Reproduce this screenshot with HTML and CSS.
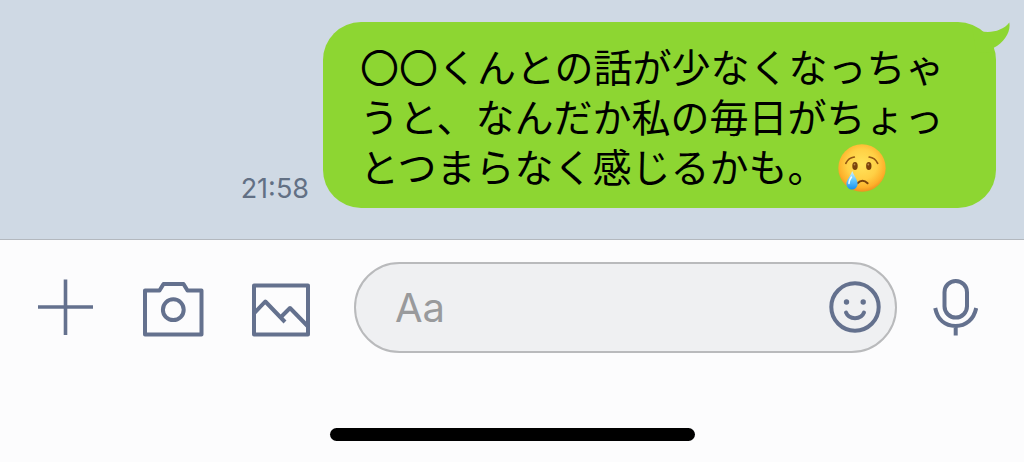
FILE: index.html
```html
<!DOCTYPE html>
<html lang="ja">
<head>
    <meta charset="UTF-8">
    <meta name="viewport" content="width=device-width, initial-scale=1.0">
    <title>トーク</title>
    <link rel="stylesheet" href="styles.css">
</head>
<body>
    <main class="chat">
        <div class="message">
            <time class="time" datetime="21:58">21:58</time>
            <div class="bubble">
                <p class="text">〇〇くんとの話が少なくなっちゃうと、なんだか私の毎日がちょっとつまらなく感じるかも。<svg class="emoji" viewBox="0 0 48 48" role="img" aria-label="泣き顔">
                    <defs>
                        <radialGradient id="face" cx="0.5" cy="0.42" r="0.58">
                            <stop offset="0" stop-color="#ffe45c"/>
                            <stop offset="0.55" stop-color="#ffd045"/>
                            <stop offset="0.85" stop-color="#fdb02a"/>
                            <stop offset="1" stop-color="#ef9020"/>
                        </radialGradient>
                        <linearGradient id="tear" x1="0" y1="0" x2="0" y2="1">
                            <stop offset="0" stop-color="#d4f3ff"/>
                            <stop offset="0.5" stop-color="#62c6fb"/>
                            <stop offset="1" stop-color="#1590ee"/>
                        </linearGradient>
                    </defs>
                    <circle cx="24" cy="24" r="23.7" fill="url(#face)"/>
                    <ellipse cx="17" cy="22" rx="2.7" ry="3.9" fill="#7a430b"/>
                    <ellipse cx="30.8" cy="22" rx="2.7" ry="3.9" fill="#7a430b"/>
                    <circle cx="16.5" cy="20.5" r="0.9" fill="#b98a4a"/>
                    <circle cx="30.3" cy="20.5" r="0.9" fill="#b98a4a"/>
                    <path d="M7.8 19.3Q10.5 13.8 16.3 13M31.2 13Q37 13.8 39.7 19.3" fill="none" stroke="#935713" stroke-width="1.7" stroke-linecap="round"/>
                    <path d="M19.5 39.2Q24.5 34.2 29.6 39.2" fill="none" stroke="#7a430b" stroke-width="2" stroke-linecap="round"/>
                    <path d="M14.2 27C17 33 19.6 36.2 19.6 40A5.6 5.6 0 0 1 8.4 40C8.4 36.2 12 33 14.2 27Z" fill="url(#tear)"/>
                    <path d="M13.5 33Q10.8 37 11 39.5" fill="none" stroke="#f0fbff" stroke-width="1.5" stroke-linecap="round"/>
                </svg></p>
                <svg class="tail" viewBox="0 0 38 32" aria-hidden="true">
                    <path d="M0 4C4 5 6 7 8.5 9C18 11.5 31 9 37.3 0.5C39 9 33 20 21.3 26L22.5 31L4 30Z"/>
                </svg>
            </div>
        </div>
    </main>

    <footer class="composer">
        <form class="bar">
            <div class="tools">
                <button type="button" class="icon" aria-label="追加">
                    <svg width="56" height="61" viewBox="0 0 56 61"><path d="M0 30H55M27.5 2.5V58" stroke-width="3.6"/></svg>
                </button>
                <button type="button" class="icon" aria-label="カメラ">
                    <svg width="62" height="61" viewBox="0 0 62 61">
                        <path d="M3 13.5H17.5L21.5 7H41.5L45.5 13.5H59.5V57.5H3Z"/>
                        <circle cx="31.3" cy="32.7" r="10.4"/>
                    </svg>
                </button>
                <button type="button" class="icon" aria-label="写真">
                    <svg width="58" height="61" viewBox="0 0 58 61">
                        <path d="M2 8.5H56V57.5H2Z"/>
                        <path d="M2 36.5L13.3 24.5L33 45M28.5 40.5L38 31L56 49.5"/>
                    </svg>
                </button>
            </div>
            <div class="field">
                <input type="text" class="input" placeholder="Aa" aria-label="メッセージ">
                <button type="button" class="icon" aria-label="スタンプ">
                    <svg width="52" height="61" viewBox="0 0 52 61">
                        <circle cx="26" cy="30" r="23.7"/>
                        <path d="M17 35.5C20 43 32 43 35 35.5" stroke-linecap="round"/>
                        <circle class="dot" cx="17.5" cy="25" r="2.7"/>
                        <circle class="dot" cx="34.2" cy="25" r="2.7"/>
                    </svg>
                </button>
            </div>
            <button type="button" class="icon" aria-label="音声">
                <svg width="45" height="61" viewBox="0 0 45 61">
                    <rect x="11.5" y="4" width="22.5" height="36.5" rx="11.2"/>
                    <path d="M2.2 31C4.5 42.5 12 49 22.5 49S40.8 42.5 43.2 31M22.7 49V58.5"/>
                </svg>
            </button>
        </form>
        <div class="home-indicator"></div>
    </footer>
</body>
</html>
```
FILE: styles.css
```css
* {
    box-sizing: border-box;
}
body {
    margin: 0;
    min-height: 100vh;
    display: flex;
    flex-direction: column;
    background-color: #fcfcfd;
    font-family: Inter, "Noto Sans CJK JP", sans-serif;
}
.chat {
    background-color: #cfd9e4;
    padding: 22px 28px 31px;
}
.message {
    display: flex;
    justify-content: flex-end;
    align-items: flex-end;
    gap: 14px;
}
.time {
    color: #627084;
    font-size: 27px;
    line-height: 38px;
}
.bubble {
    position: relative;
    max-width: 673px;
    padding: 18px 37px;
    border-radius: 38px;
    background-color: #8dd632;
}
.text {
    margin: 0;
    color: #000;
    font-family: "Noto Sans CJK JP", sans-serif;
    font-size: 39px;
    line-height: 50px;
}
.emoji {
    width: 48px;
    height: 48px;
    margin: 4px 0 -4px 12px;
    vertical-align: top;
}
.tail {
    position: absolute;
    top: 0;
    right: -14px;
    width: 38px;
    height: 32px;
    fill: #8dd632;
}
.composer {
    flex: 1;
    border-top: 1px solid #b3b8be;
    padding: 22px 0 21px;
    display: flex;
    flex-direction: column;
    justify-content: space-between;
}
.bar {
    display: flex;
    align-items: center;
    gap: 36px;
    padding: 0 46px 0 38px;
}
.tools {
    display: flex;
    gap: 48px;
    margin-right: 8px;
}
.icon {
    display: flex;
    padding: 0;
    border: none;
    background: none;
    cursor: pointer;
}
.icon svg {
    fill: none;
    stroke: #64718e;
    stroke-width: 4;
    stroke-linejoin: round;
}
.icon .dot {
    fill: #64718e;
    stroke: none;
}
.field {
    flex: 1;
    min-width: 0;
    display: flex;
    align-items: center;
    height: 91px;
    padding: 0 14px 0 39px;
    border: 2px solid #b9babc;
    border-radius: 46px;
    background-color: #eff0f2;
}
.input {
    flex: 1;
    min-width: 0;
    padding: 0;
    border: none;
    outline: none;
    background: none;
    color: #000;
    font-family: inherit;
    font-size: 40px;
}
.input::placeholder {
    color: #999a9c;
    opacity: 1;
}
.home-indicator {
    align-self: center;
    width: 365px;
    height: 13px;
    border-radius: 7px;
    background-color: #000;
}
```
